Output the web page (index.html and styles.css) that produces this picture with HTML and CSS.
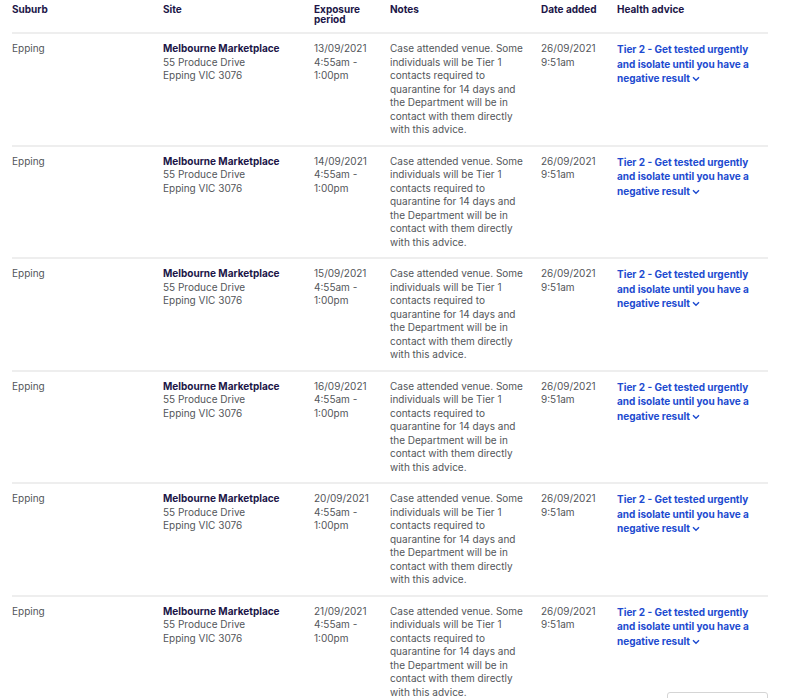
FILE: index.html
```html
<!DOCTYPE html>
<html>
<head>
<meta charset="utf-8">
<link rel="stylesheet" href="styles.css">
</head>
<body>
<div class="page">
<table class="exposure">
<colgroup>
<col class="w2"><col class="w2"><col class="w1"><col class="w2"><col class="w1"><col class="w2">
</colgroup>
<thead>
<tr><th>Suburb</th><th>Site</th><th>Exposure period</th><th>Notes</th><th>Date added</th><th>Health advice</th></tr>
</thead>
<tbody>
<tr>
<td>Epping</td>
<td><span class="site-name">Melbourne Marketplace</span><br>55 Produce Drive<br>Epping VIC 3076</td>
<td>13/09/2021<br>4:55am - 1:00pm</td>
<td>Case attended venue. Some individuals will be Tier 1 contacts required to quarantine for 14 days and the Department will be in contact with them directly with this advice.</td>
<td>26/09/2021<br>9:51am</td>
<td><a class="advice">Tier 2 - Get tested urgently and isolate until you have a negative result<svg class="chev" viewBox="0 0 8 6" width="8" height="6"><path d="M1 1.2 L4 4.2 L7 1.2" fill="none" stroke="currentColor" stroke-width="1.4"/></svg></a></td>
</tr>
<tr>
<td>Epping</td>
<td><span class="site-name">Melbourne Marketplace</span><br>55 Produce Drive<br>Epping VIC 3076</td>
<td>14/09/2021<br>4:55am - 1:00pm</td>
<td>Case attended venue. Some individuals will be Tier 1 contacts required to quarantine for 14 days and the Department will be in contact with them directly with this advice.</td>
<td>26/09/2021<br>9:51am</td>
<td><a class="advice">Tier 2 - Get tested urgently and isolate until you have a negative result<svg class="chev" viewBox="0 0 8 6" width="8" height="6"><path d="M1 1.2 L4 4.2 L7 1.2" fill="none" stroke="currentColor" stroke-width="1.4"/></svg></a></td>
</tr>
<tr>
<td>Epping</td>
<td><span class="site-name">Melbourne Marketplace</span><br>55 Produce Drive<br>Epping VIC 3076</td>
<td>15/09/2021<br>4:55am - 1:00pm</td>
<td>Case attended venue. Some individuals will be Tier 1 contacts required to quarantine for 14 days and the Department will be in contact with them directly with this advice.</td>
<td>26/09/2021<br>9:51am</td>
<td><a class="advice">Tier 2 - Get tested urgently and isolate until you have a negative result<svg class="chev" viewBox="0 0 8 6" width="8" height="6"><path d="M1 1.2 L4 4.2 L7 1.2" fill="none" stroke="currentColor" stroke-width="1.4"/></svg></a></td>
</tr>
<tr>
<td>Epping</td>
<td><span class="site-name">Melbourne Marketplace</span><br>55 Produce Drive<br>Epping VIC 3076</td>
<td>16/09/2021<br>4:55am - 1:00pm</td>
<td>Case attended venue. Some individuals will be Tier 1 contacts required to quarantine for 14 days and the Department will be in contact with them directly with this advice.</td>
<td>26/09/2021<br>9:51am</td>
<td><a class="advice">Tier 2 - Get tested urgently and isolate until you have a negative result<svg class="chev" viewBox="0 0 8 6" width="8" height="6"><path d="M1 1.2 L4 4.2 L7 1.2" fill="none" stroke="currentColor" stroke-width="1.4"/></svg></a></td>
</tr>
<tr>
<td>Epping</td>
<td><span class="site-name">Melbourne Marketplace</span><br>55 Produce Drive<br>Epping VIC 3076</td>
<td>20/09/2021<br>4:55am - 1:00pm</td>
<td>Case attended venue. Some individuals will be Tier 1 contacts required to quarantine for 14 days and the Department will be in contact with them directly with this advice.</td>
<td>26/09/2021<br>9:51am</td>
<td><a class="advice">Tier 2 - Get tested urgently and isolate until you have a negative result<svg class="chev" viewBox="0 0 8 6" width="8" height="6"><path d="M1 1.2 L4 4.2 L7 1.2" fill="none" stroke="currentColor" stroke-width="1.4"/></svg></a></td>
</tr>
<tr>
<td>Epping</td>
<td><span class="site-name">Melbourne Marketplace</span><br>55 Produce Drive<br>Epping VIC 3076</td>
<td>21/09/2021<br>4:55am - 1:00pm</td>
<td>Case attended venue. Some individuals will be Tier 1 contacts required to quarantine for 14 days and the Department will be in contact with them directly with this advice.</td>
<td>26/09/2021<br>9:51am</td>
<td><a class="advice">Tier 2 - Get tested urgently and isolate until you have a negative result<svg class="chev" viewBox="0 0 8 6" width="8" height="6"><path d="M1 1.2 L4 4.2 L7 1.2" fill="none" stroke="currentColor" stroke-width="1.4"/></svg></a></td>
</tr>
</tbody>
</table>
</div>
<div class="float-btn"></div>
</body>
</html>
```

FILE: styles.css
```css
html, body {
  margin: 0;
  padding: 0;
  background: #ffffff;
  overflow: hidden;
}
.page {
  padding: 0 33px 0 12px;
  font-family: Inter, "Open Sans", sans-serif;
  font-size: 10px;
  color: #53565a;
}
.exposure {
  width: 755px;
  border-collapse: collapse;
  table-layout: fixed;
}
.w2 { width: 151px; }
.w1 { width: 76px; }
.exposure th {
  text-align: left;
  vertical-align: top;
  font-weight: 700;
  color: #201547;
  line-height: 10px;
  padding: 4px 10px 8px 0;
  border-bottom: 2px solid #eeeeee;
}
.exposure td {
  vertical-align: top;
  line-height: 13.5px;
  padding: 8px 10px 8px 0;
  border-bottom: 2px solid #eeeeee;
}
.site-name {
  font-weight: 700;
  color: #201547;
}
.advice {
  font-weight: 700;
  color: #1d4bd0;
  line-height: 14.5px;
  display: block;
}
.chev {
  margin-left: 2px;
  vertical-align: 0px;
}
.float-btn {
  position: absolute;
  left: 667px;
  top: 692px;
  width: 99px;
  height: 20px;
  border: 1px solid #d5d5d5;
  border-radius: 3px;
  background: #fff;
}
```
